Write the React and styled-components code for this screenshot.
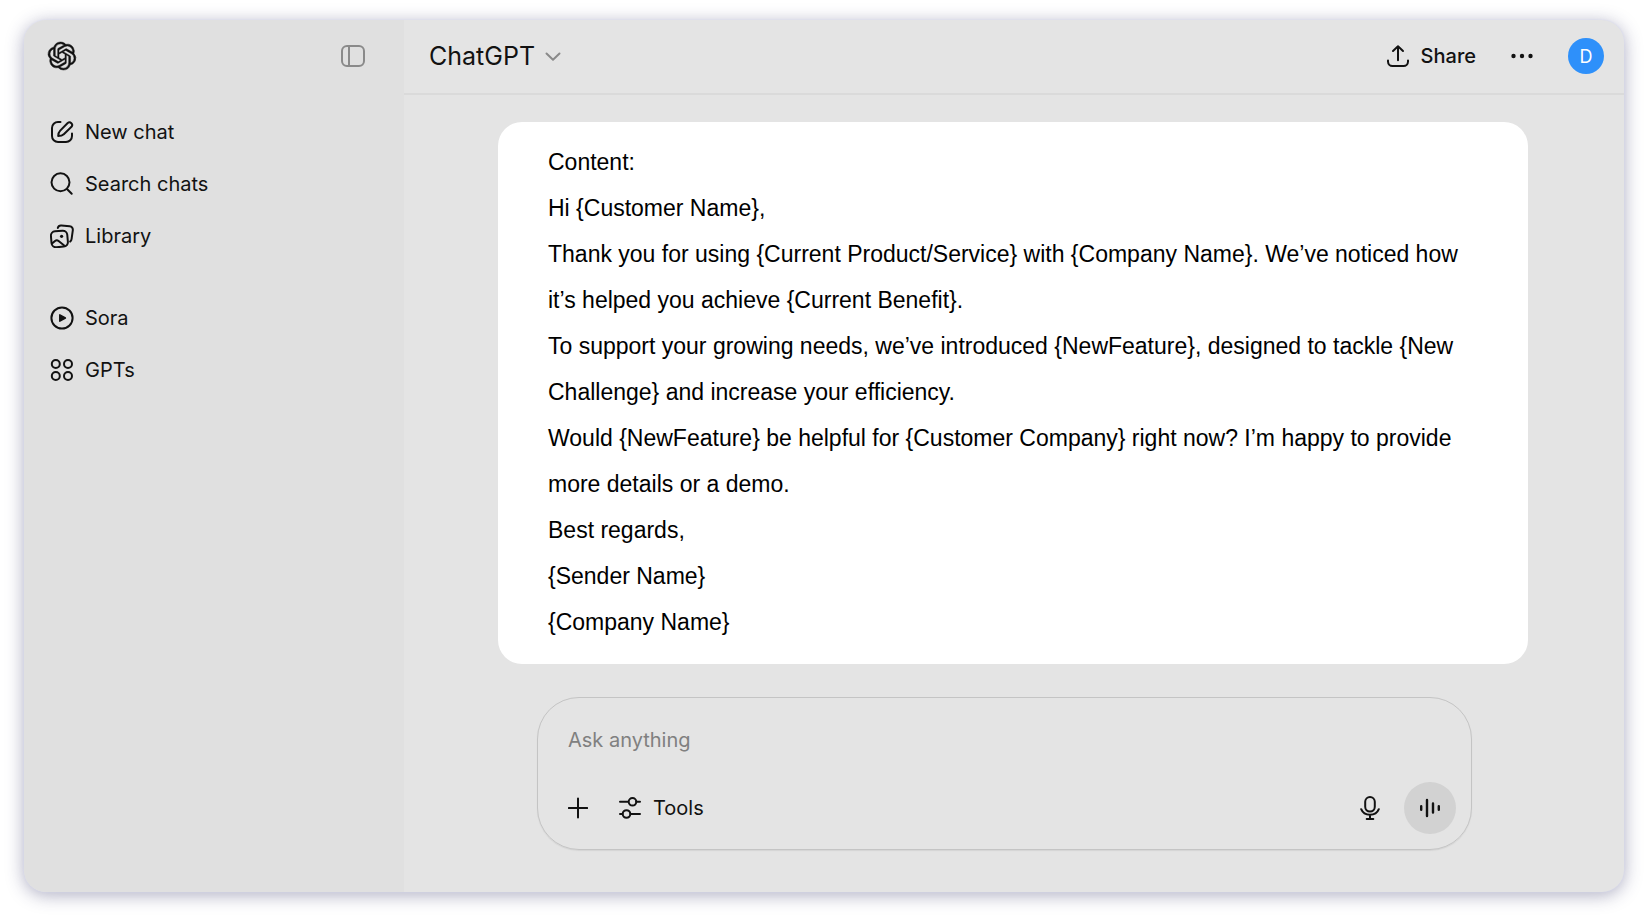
import React from 'react';
import styled, { createGlobalStyle } from 'styled-components';
import { SiOpenai } from 'react-icons/si';

const GlobalStyle = createGlobalStyle`
* {
    box-sizing: border-box;
}
body {
    margin: 0;
    background: #fff;
    color: #121212;
    font-family: Inter, "Liberation Sans", sans-serif;
}
button, input {
    font-family: inherit;
    color: inherit;
}
`

const Window = styled.div`
    display: flex;
    min-height: calc(100vh - 49px);
    margin: 20px 24px 29px;
    border-radius: 22px;
    overflow: hidden;
    background: #e4e4e4;
    box-shadow: 0 0 2px #d6d8f0, 0 3px 18px rgba(50, 50, 100, 0.4);
`

const Sidebar = styled.aside`
    flex: none;
    width: 380px;
    background: #e0e0e0;
`

const SidebarTop = styled.div`
    display: flex;
    align-items: center;
    justify-content: space-between;
    height: 71px;
    padding: 0 38px 0 24px;
`

const IconButton = styled.button`
    display: flex;
    align-items: center;
    justify-content: center;
    padding: 0;
    border: 0;
    background: none;
    color: ${props => props.$color || 'inherit'};
    cursor: pointer;
`

const Logo = styled(SiOpenai)`
    overflow: visible;
    stroke: currentColor;
    stroke-width: 0.4px;
`

const Nav = styled.nav`
    display: flex;
    flex-direction: column;
    gap: 30px;
    padding: 15px 26px;
`

const NavGroup = styled.div`
    display: flex;
    flex-direction: column;
`

const NavLink = styled.a`
    display: flex;
    align-items: center;
    gap: 11px;
    height: 52px;
    font-size: 20px;
    line-height: 24px;
    color: inherit;
    text-decoration: none;
`

const Main = styled.main`
    flex: 1;
    min-width: 0;
    display: flex;
    flex-direction: column;
`

const Header = styled.header`
    display: flex;
    align-items: center;
    justify-content: space-between;
    height: 75px;
    padding: 0 20px 1px 25px;
    border-bottom: 2px solid #dadada;
`

const ModelButton = styled(IconButton)`
    gap: 10px;
    font-size: 25px;
    line-height: 32px;
`

const Actions = styled.div`
    display: flex;
    align-items: center;
    gap: 34px;
`

const ShareButton = styled(IconButton)`
    gap: 11px;
    font-size: 20px;
    font-weight: 500;
    line-height: 24px;
`

const Avatar = styled.button`
    width: 36px;
    height: 36px;
    padding: 0;
    border: 0;
    border-radius: 50%;
    background: #2e90fa;
    color: #fff;
    font-size: 18px;
    cursor: pointer;
`

const Message = styled.article`
    margin: 27px 96px 0 94px;
    padding: 17px 50px 19px;
    border-radius: 24px;
    background: #fff;
    color: #000;
    font-family: "Liberation Sans", Arial, sans-serif;
    font-size: 23px;
    line-height: 46px;

    p {
        margin: 0;
    }
`

const Composer = styled.form`
    display: flex;
    flex-direction: column;
    gap: 26px;
    margin: 33px 152px 42px 133px;
    padding: 26px 15px 15px 30px;
    border: 1px solid #c4c4c4;
    border-radius: 42px;
    box-shadow: 0 1px 1px #d4d4d4;
`

const Prompt = styled.input`
    width: 100%;
    height: 32px;
    padding: 0;
    border: 0;
    outline: 0;
    background: none;
    font-size: 20px;

    &::placeholder {
        color: #808080;
        opacity: 1;
    }
`

const Toolbar = styled.div`
    display: flex;
    align-items: center;
    justify-content: space-between;
`

const ToolGroup = styled.div`
    display: flex;
    align-items: center;
    gap: ${props => props.$gap};
`

const ToolsButton = styled(IconButton)`
    gap: 11px;
    font-size: 20px;
    line-height: 24px;
`

const VoiceButton = styled(IconButton)`
    width: 52px;
    height: 52px;
    border-radius: 50%;
    background: #d2d2d2;
`

const Svg = styled.svg`
    display: block;
    flex: none;
    fill: none;
    stroke: currentColor;
    stroke-width: 2;
    stroke-linecap: round;
    stroke-linejoin: round;
`

const Icon = ({ width = 24, height = 24, children }) => (
    <Svg width={width} height={height} viewBox={`0 0 ${width} ${height}`} aria-hidden="true">
        {children}
    </Svg>
)

const PanelIcon = () => (
    <Icon width={26}>
        <rect x="2" y="2" width="22" height="20" rx="5" />
        <path d="M9 2v20" />
    </Icon>
)

const NewChatIcon = () => (
    <Icon>
        <path d="M10.5 2H8a6 6 0 0 0-6 6v8a6 6 0 0 0 6 6h8a6 6 0 0 0 6-6v-2.5" />
        <path d="M8.2 16c0-3 .8-4.2 2-5.4L17.7 3a2.7 2.7 0 0 1 3.8 3.8l-7.7 7.4c-1.3 1.2-2.6 1.8-5.6 1.8z" />
    </Icon>
)

const SearchIcon = () => (
    <Icon>
        <circle cx="10.5" cy="10.3" r="9" />
        <path d="M17 17l4.7 4.7" />
    </Icon>
)

const LibraryIcon = () => (
    <Icon>
        <rect x="1.2" y="7" width="16.4" height="16" rx="4.5" transform="rotate(-5 9 15)" />
        <path d="M7.8 4c.5-1.9 1.7-2.7 3.6-2.5l8.3.8c2.2.3 3.4 1.9 3.1 4l-1.2 8.5c-.2 1.4-.7 2.2-1.4 2.8" />
        <path d="M2 19.6l3-2.7c1.1-.9 2.5-.9 3.6 0l5.6 4.6" />
        <circle cx="11.6" cy="12.3" r="1.6" fill="currentColor" stroke="none" />
    </Icon>
)

const SoraIcon = () => (
    <Icon>
        <circle cx="12" cy="12" r="10.6" />
        <path d="M9.8 8.8v6.4l5.6-3.2z" fill="currentColor" strokeWidth="1.5" />
    </Icon>
)

const GptsIcon = () => (
    <Icon>
        <circle cx="5.8" cy="6" r="4" />
        <circle cx="18" cy="6" r="4" />
        <circle cx="5.8" cy="18" r="4" />
        <circle cx="18" cy="18" r="4" />
    </Icon>
)

const ChevronIcon = () => (
    <Icon width={16}>
        <path d="M1.5 9.5l6.5 6.3 6.5-6.3" />
    </Icon>
)

const ShareIcon = () => (
    <Icon>
        <path d="M2 16.5v1a4.5 4.5 0 0 0 4.5 4.5h11a4.5 4.5 0 0 0 4.5-4.5v-1" />
        <path d="M12 16.2V2.5M7 7l5-4.7L17 7" />
    </Icon>
)

const MoreIcon = () => (
    <Icon>
        <g fill="currentColor" stroke="none">
            <circle cx="3.5" cy="12" r="2.2" />
            <circle cx="12" cy="12" r="2.2" />
            <circle cx="20.5" cy="12" r="2.2" />
        </g>
    </Icon>
)

const PlusIcon = () => (
    <Icon width={20}>
        <path d="M10 2.5v19M.8 12h18.4" />
    </Icon>
)

const ToolsIcon = () => (
    <Icon>
        <path d="M2 5.8h8M18.2 5.8H22M2 18H4.5M12.5 18H22" />
        <circle cx="14.5" cy="5.8" r="3.8" />
        <circle cx="8.5" cy="18" r="3.8" />
    </Icon>
)

const MicIcon = () => (
    <Icon width={20}>
        <rect x="5.2" y="1" width="9.6" height="14.6" rx="4.8" />
        <path d="M1.2 13.2c1.4 3.6 4.7 5.6 8.8 5.6s7.4-2 8.8-5.6M10 19v3.6M6.7 23h6.6" />
    </Icon>
)

const VoiceIcon = () => (
    <Icon>
        <path d="M3.2 10.3v3.4M9 4v16M15 7.5v9M20.8 10.3v3.4" strokeWidth="2.4" />
    </Icon>
)

const chatLinks = [
    { label: 'New chat', icon: <NewChatIcon /> },
    { label: 'Search chats', icon: <SearchIcon /> },
    { label: 'Library', icon: <LibraryIcon /> },
]

const appLinks = [
    { label: 'Sora', icon: <SoraIcon /> },
    { label: 'GPTs', icon: <GptsIcon /> },
]

const lines = [
    'Content:',
    'Hi {Customer Name},',
    'Thank you for using {Current Product/Service} with {Company Name}. We’ve noticed how it’s helped you achieve {Current Benefit}.',
    'To support your growing needs, we’ve introduced {NewFeature}, designed to tackle {New Challenge} and increase your efficiency.',
    'Would {NewFeature} be helpful for {Customer Company} right now? I’m happy to provide more details or a demo.',
    'Best regards,',
    '{Sender Name}',
    '{Company Name}',
]

const Links = ({ items }) => (
    <NavGroup>
        {items.map(item => (
            <NavLink href="#" key={item.label}>
                {item.icon}
                {item.label}
            </NavLink>
        ))}
    </NavGroup>
)

const App = () => {
    return (
        <>
            <GlobalStyle />
            <Window>
                <Sidebar>
                    <SidebarTop>
                        <IconButton aria-label="Home">
                            <Logo size={28} />
                        </IconButton>
                        <IconButton aria-label="Close sidebar" $color="#8a8a8a">
                            <PanelIcon />
                        </IconButton>
                    </SidebarTop>
                    <Nav>
                        <Links items={chatLinks} />
                        <Links items={appLinks} />
                    </Nav>
                </Sidebar>

                <Main>
                    <Header>
                        <ModelButton>
                            ChatGPT
                            <IconButton as="span" $color="#8a8a8a">
                                <ChevronIcon />
                            </IconButton>
                        </ModelButton>
                        <Actions>
                            <ShareButton>
                                <ShareIcon />
                                Share
                            </ShareButton>
                            <IconButton aria-label="More options">
                                <MoreIcon />
                            </IconButton>
                            <Avatar aria-label="Account">D</Avatar>
                        </Actions>
                    </Header>

                    <Message>
                        {lines.map(line => <p key={line}>{line}</p>)}
                    </Message>

                    <Composer onSubmit={e => e.preventDefault()}>
                        <Prompt type="text" aria-label="Message" placeholder="Ask anything" />
                        <Toolbar>
                            <ToolGroup $gap="30px">
                                <IconButton type="button" aria-label="Add files">
                                    <PlusIcon />
                                </IconButton>
                                <ToolsButton type="button">
                                    <ToolsIcon />
                                    Tools
                                </ToolsButton>
                            </ToolGroup>
                            <ToolGroup $gap="24px">
                                <IconButton type="button" aria-label="Dictate">
                                    <MicIcon />
                                </IconButton>
                                <VoiceButton type="button" aria-label="Voice mode">
                                    <VoiceIcon />
                                </VoiceButton>
                            </ToolGroup>
                        </Toolbar>
                    </Composer>
                </Main>
            </Window>
        </>
    );
}

export default App;
